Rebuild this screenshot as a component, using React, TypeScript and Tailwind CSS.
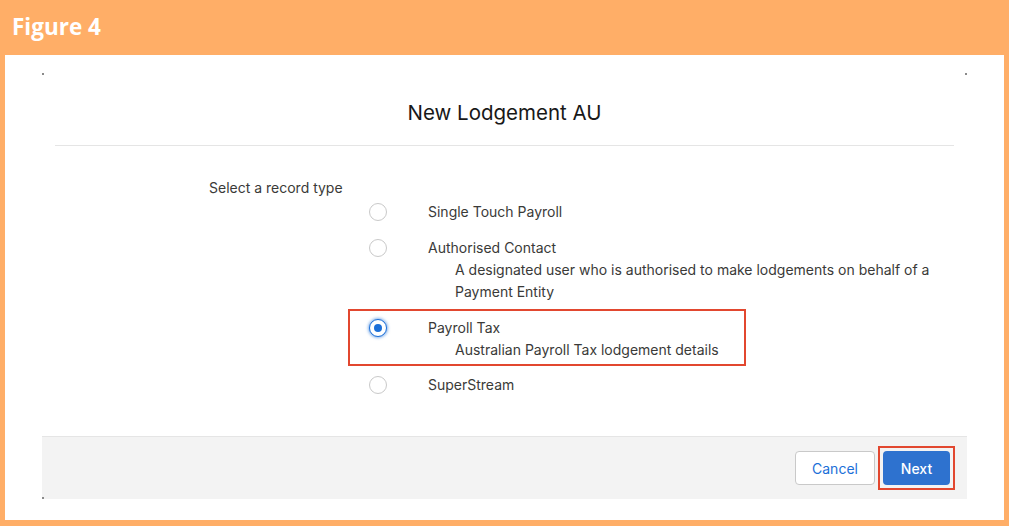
import type { ReactNode } from 'react';

type Option = {
  id: string;
  label: string;
  description?: string[];
};

const options: Option[] = [
  { id: 'stp', label: 'Single Touch Payroll' },
  {
    id: 'contact',
    label: 'Authorised Contact',
    description: [
      'A designated user who is authorised to make lodgements on behalf of a',
      'Payment Entity',
    ],
  },
  { id: 'payroll', label: 'Payroll Tax', description: ['Australian Payroll Tax lodgement details'] },
  { id: 'super', label: 'SuperStream' },
];

function Radio({ checked }: { checked?: boolean }) {
  if (checked) {
    return (
      <span className="flex items-center justify-center w-[18px] h-[18px] rounded-full border border-[#1b6fd8] bg-white shadow-[0_0_3px_1px_rgba(27,111,216,0.55)] shrink-0">
        <span className="w-[8px] h-[8px] rounded-full bg-[#1b6fd8]" />
      </span>
    );
  }
  return <span className="w-[18px] h-[18px] rounded-full border border-[#c9c9c9] bg-white shrink-0" />;
}

function OptionRow({ option, checked }: { option: Option; checked?: boolean }) {
  return (
    <div className="flex flex-col">
      <div className="flex items-center h-[22px]">
        <Radio checked={checked} />
        <span className="ml-[41px]">{option.label}</span>
      </div>
      {option.description?.map((line) => (
        <div key={line} className="pl-[86px] h-[22px] leading-[22px]">
          {line}
        </div>
      ))}
    </div>
  );
}

function CornerMark({ className }: { className: string }) {
  return <span className={`absolute w-[2px] h-[2px] bg-[#8a8a8a] ${className}`} />;
}

function Highlight({ children, className }: { children: ReactNode; className: string }) {
  // red annotation frame from the original figure
  return <div className={`border-2 border-[#e2472f] ${className}`}>{children}</div>;
}

export default function App() {
  return (
    <div
      className="w-[1009px] h-[526px] bg-[#ffae67] flex flex-col"
      style={{ fontFamily: 'Inter, "Noto Sans", sans-serif' }}
    >
      <div className="h-[55px] pl-[12px] flex items-center">
        <span
          className="text-white font-bold text-[22.5px] leading-none"
          style={{ fontFamily: '"Open Sans", sans-serif' }}
        >
          Figure 4
        </span>
      </div>

      <div className="flex-1 mx-[5px] mb-[6px] bg-white px-[37px] pt-[18px]">
        <div className="relative h-[426px] flex flex-col text-[14px] text-[#3a3a38]">
          <CornerMark className="left-0 top-0" />
          <CornerMark className="right-0 top-0" />
          <CornerMark className="left-0 bottom-0" />

          <div className="h-[72px] pt-2 flex items-center justify-center">
            <h2 className="text-[20.5px] text-[#181818]">New Lodgement AU</h2>
          </div>
          <div className="mx-[13px] h-px bg-[#e5e5e5]" />

          <div className="pl-[167px] mt-[31px] leading-[22px]">Select a record type</div>

          <div className="flex flex-col pl-[327px] mt-[2px] leading-[22px]">
            <OptionRow option={options[0]} />
            <div className="mt-[14px]">
              <OptionRow option={options[1]} />
            </div>
            <Highlight className="-ml-[21px] w-[398px] mt-[6px] pl-[19px] pt-[6px] pb-[3px]">
              <OptionRow option={options[2]} checked />
            </Highlight>
            <div className="mt-[8px]">
              <OptionRow option={options[3]} />
            </div>
          </div>

          <div className="mt-auto h-[63px] bg-[#f3f3f3] border-t border-[#e5e5e5] flex items-center justify-end pr-[12px]">
            <button className="w-[80px] h-[34px] rounded-[4px] border border-[#c9c9c9] bg-white text-[#1b6fd8] text-[14px]">
              Cancel
            </button>
            <Highlight className="ml-[3px] p-[3px]">
              <button className="block w-[67px] h-[34px] rounded-[4px] bg-[#2e72cf] text-white text-[14px] font-medium">
                Next
              </button>
            </Highlight>
          </div>
        </div>
      </div>
    </div>
  );
}
